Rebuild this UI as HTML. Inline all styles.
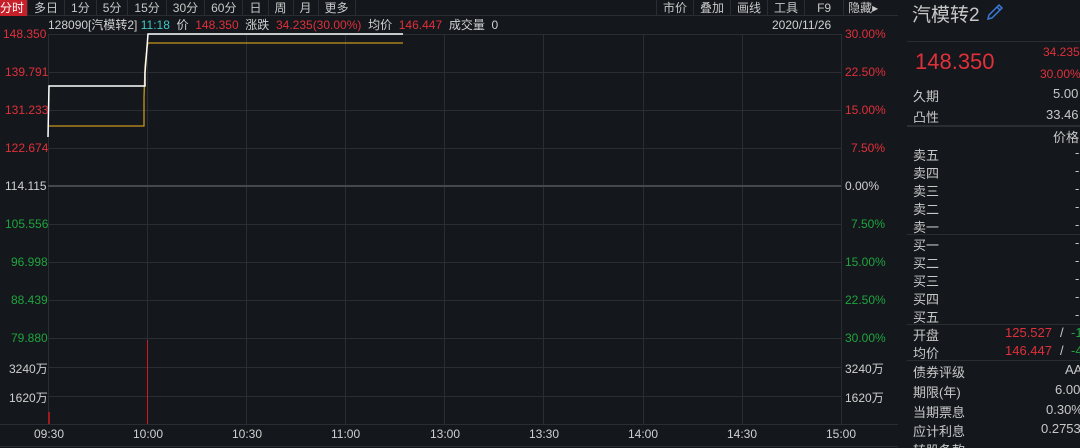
<!DOCTYPE html><html><head><meta charset="utf-8"><style>
*{margin:0;padding:0;box-sizing:border-box}
body{width:1080px;height:448px;background:#14171c;overflow:hidden;position:relative;font-family:"Liberation Sans","Noto Sans CJK SC",sans-serif;font-size:12px;color:#c8c8c8}
.a{position:absolute;white-space:nowrap}
.r{color:#e0303a}.g{color:#1fa43e}.c{color:#3cc8c8}.w{color:#d0d0d0}
.tb span{display:inline-block;height:16px;line-height:16px;padding:0 6px;border-right:1px solid #2a2d32;font-size:12px;color:#c8c8c8}
.rp div{position:absolute;white-space:nowrap;font-size:13px}
</style></head><body>
<div class="a tb" style="left:0;top:0;height:16px;width:898px;border-bottom:1px solid #2a2d32">
<span style="background:#c8202a;color:#fff;padding:0 3px 0 0">分时</span><span>多日</span><span>1分</span><span>5分</span><span>15分</span><span>30分</span><span>60分</span><span>日</span><span>周</span><span>月</span><span>更多</span>
</div>
<div class="a tb" style="left:656px;top:0;border-left:1px solid #2a2d32"><span>市价</span><span>叠加</span><span>画线</span><span>工具</span><span style="padding:0 12px">F9</span><span style="border:none;padding:0 4px">隐藏▸</span></div>
<div class="a" style="left:48px;top:17px;font-size:12px;line-height:16px"><span class="w">128090[汽模转2]</span> <span class="c">11:18</span> &nbsp;<span class="w">价</span> &nbsp;<span class="r">148.350</span> &nbsp;<span class="w">涨跌</span> &nbsp;<span class="r">34.235(30.00%)</span> &nbsp;<span class="w">均价</span> &nbsp;<span class="r">146.447</span> &nbsp;<span class="w">成交量</span> &nbsp;<span class="w">0</span></div>
<div class="a w" style="left:772px;top:17px;line-height:16px">2020/11/26</div>
<svg class="a" style="left:0;top:0" width="898" height="448">
<g stroke="#2a2d32" stroke-width="1">
<line x1="48.5" y1="34" x2="48.5" y2="424"/><line x1="147.5" y1="34" x2="147.5" y2="424"/><line x1="246.5" y1="34" x2="246.5" y2="424"/><line x1="345.5" y1="34" x2="345.5" y2="424"/><line x1="444.5" y1="34" x2="444.5" y2="424"/><line x1="543.5" y1="34" x2="543.5" y2="424"/><line x1="643.5" y1="34" x2="643.5" y2="424"/><line x1="742.5" y1="34" x2="742.5" y2="424"/><line x1="841.5" y1="34" x2="841.5" y2="424"/>
<line x1="48" y1="34.5" x2="841" y2="34.5"/><line x1="48" y1="72.5" x2="841" y2="72.5"/><line x1="48" y1="110.5" x2="841" y2="110.5"/><line x1="48" y1="148.5" x2="841" y2="148.5"/><line x1="48" y1="224.5" x2="841" y2="224.5"/><line x1="48" y1="262.5" x2="841" y2="262.5"/><line x1="48" y1="300.5" x2="841" y2="300.5"/><line x1="48" y1="338.5" x2="841" y2="338.5"/><line x1="48" y1="367.5" x2="841" y2="367.5"/><line x1="48" y1="396.5" x2="841" y2="396.5"/>
<line x1="0" y1="424.5" x2="898" y2="424.5"/><line x1="0" y1="446.5" x2="898" y2="446.5"/>
</g>
<line x1="48" y1="186" x2="841" y2="186" stroke="#45484d" stroke-width="2"/>
<line x1="147.5" y1="340" x2="147.5" y2="424" stroke="#c81c26" stroke-width="1"/>
<line x1="49" y1="412" x2="49" y2="424" stroke="#a01820" stroke-width="2"/>
<polyline points="49,126 144,126 144,98 145,66 147,48 148,43 403,43" fill="none" stroke="#c8961e" stroke-width="1.3"/>
<polyline points="48,137 49,86 145,86 145,73 148,34 403,34" fill="none" stroke="#fff" stroke-width="1.5"/>
<line x1="898.5" y1="0" x2="898.5" y2="448" stroke="#2a2d32"/><line x1="906.5" y1="0" x2="906.5" y2="448" stroke="#2a2d32"/>
<polygon points="901,323 905,327 901,331" fill="#ddd"/>
</svg>
<div class="a r" style="left:3px;top:27px">148.350</div>
<div class="a r" style="left:5px;top:65px">139.791</div>
<div class="a r" style="left:5px;top:103px">131.233</div>
<div class="a r" style="left:5px;top:141px">122.674</div>
<div class="a w" style="left:5px;top:179px">114.115</div>
<div class="a g" style="left:5px;top:217px">105.556</div>
<div class="a g" style="left:11px;top:255px">96.998</div>
<div class="a g" style="left:11px;top:293px">88.439</div>
<div class="a g" style="left:11px;top:331px">79.880</div>
<div class="a w" style="left:9px;top:360px">3240万</div>
<div class="a w" style="left:9px;top:389px">1620万</div>
<div class="a r" style="left:845px;top:27px">30.00%</div>
<div class="a r" style="left:845px;top:65px">22.50%</div>
<div class="a r" style="left:845px;top:103px">15.00%</div>
<div class="a r" style="left:851px;top:141px">7.50%</div>
<div class="a w" style="left:845px;top:179px">0.00%</div>
<div class="a g" style="left:851px;top:217px">7.50%</div>
<div class="a g" style="left:845px;top:255px">15.00%</div>
<div class="a g" style="left:845px;top:293px">22.50%</div>
<div class="a g" style="left:845px;top:331px">30.00%</div>
<div class="a w" style="left:845px;top:360px">3240万</div>
<div class="a w" style="left:845px;top:389px">1620万</div>
<div class="a w" style="left:34px;top:427px">09:30</div>
<div class="a w" style="left:133px;top:427px">10:00</div>
<div class="a w" style="left:232px;top:427px">10:30</div>
<div class="a w" style="left:331px;top:427px">11:00</div>
<div class="a w" style="left:430px;top:427px">13:00</div>
<div class="a w" style="left:529px;top:427px">13:30</div>
<div class="a w" style="left:628px;top:427px">14:00</div>
<div class="a w" style="left:727px;top:427px">14:30</div>
<div class="a w" style="left:826px;top:427px">15:00</div>
<div class="a rp" style="left:907px;top:0;width:173px;height:448px;overflow:hidden">
<div style="left:5px;top:0;font-size:19px;color:#c8c8c8">汽模转2</div>
<svg style="position:absolute;left:78px;top:2px" width="20" height="20"><path d="M3 17 L4 13 L14 3 L17 6 L7 16 Z M12 5 L15 8" fill="none" stroke="#3a7ad8" stroke-width="1.5"/></svg>
<div style="left:0;top:41px;width:173px;border-top:1px solid #2a2d32"></div>
<div class="r" style="left:8px;top:49px;font-size:22px">148.350</div>
<div class="r" style="left:136px;top:45px;font-size:12px">34.235</div>
<div class="r" style="left:133px;top:67px;font-size:12px">30.00%</div>
<div style="left:6px;top:86px">久期</div><div style="left:146px;top:86px">5.00</div>
<div style="left:6px;top:107px">凸性</div><div style="left:139px;top:107px">33.46</div>
<div style="left:0;top:125px;width:173px;border-top:2px solid #2a2d32"></div>
<div style="left:146px;top:127px">价格</div>
<div style="left:6px;top:145px">卖五</div><div style="left:6px;top:163px">卖四</div><div style="left:6px;top:181px">卖三</div><div style="left:6px;top:199px">卖二</div><div style="left:6px;top:217px">卖一</div>
<div style="left:168px;top:145px">-</div><div style="left:168px;top:163px">-</div><div style="left:168px;top:181px">-</div><div style="left:168px;top:199px">-</div><div style="left:168px;top:217px">-</div>
<div style="left:0;top:234px;width:173px;border-top:1px solid #2a2d32"></div>
<div style="left:6px;top:235px">买一</div><div style="left:6px;top:253px">买二</div><div style="left:6px;top:271px">买三</div><div style="left:6px;top:289px">买四</div><div style="left:6px;top:307px">买五</div>
<div style="left:168px;top:235px">-</div><div style="left:168px;top:253px">-</div><div style="left:168px;top:271px">-</div><div style="left:168px;top:289px">-</div><div style="left:168px;top:307px">-</div>
<div style="left:0;top:324px;width:173px;border-top:1px solid #2a2d32"></div>
<div style="left:6px;top:325px">开盘</div><div class="r" style="left:98px;top:325px">125.527</div><div style="left:153px;top:325px">/</div><div class="g" style="left:164px;top:325px">-1.707</div>
<div style="left:6px;top:343px">均价</div><div class="r" style="left:98px;top:343px">146.447</div><div style="left:153px;top:343px">/</div><div class="g" style="left:164px;top:343px">-4.696</div>
<div style="left:0;top:360px;width:173px;border-top:1px solid #2a2d32"></div>
<div style="left:6px;top:362px">债券评级</div><div style="left:158px;top:362px">AA</div>
<div style="left:6px;top:382px">期限(年)</div><div style="left:148px;top:382px">6.00</div>
<div style="left:6px;top:402px">当期票息</div><div style="left:139px;top:402px">0.30%</div>
<div style="left:6px;top:421px">应计利息</div><div style="left:134px;top:421px">0.2753</div>
<div style="left:6px;top:440px">转股条款</div>
</div>
</body></html>
